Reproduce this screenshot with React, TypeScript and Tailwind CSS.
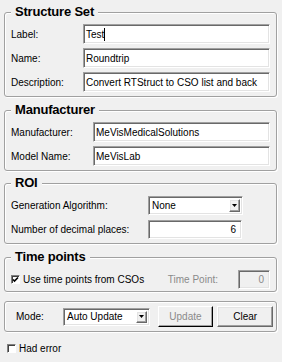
const sunken =
  "border border-t-[#a0a0a0] border-l-[#a0a0a0] border-b-white border-r-white shadow-[inset_1px_1px_0_#696969,inset_-1px_-1px_0_#e3e3e3]";
const raised =
  "border border-t-white border-l-white border-b-[#696969] border-r-[#696969] shadow-[inset_-1px_-1px_0_#a0a0a0,inset_1px_1px_0_#e3e3e3] bg-[#f0f0f0]";

function Group({ title, children, className = "" }: { title: string; children: React.ReactNode; className?: string }) {
  return (
    <fieldset
      className={`border border-[#a0a0a0] rounded-[3px] px-1.5 shadow-[inset_1px_1px_0_white,1px_1px_0_white] ${className}`}
    >
      <legend className="px-1 bg-[#f0f0f0] text-[13px] font-bold leading-4 tracking-[-0.2px]">{title}</legend>
      {children}
    </fieldset>
  );
}

function TextRow({ label, value, labelW, caret }: { label: string; value: string; labelW: string; caret?: boolean }) {
  return (
    <div className="flex items-center h-5">
      <span className={`${labelW} shrink-0`}>{label}</span>
      <div className={`flex-1 h-5 bg-white ${sunken} flex items-center pl-[2px]`}>
        <span>{value}</span>
        {caret && <span className="w-px h-[13px] bg-black" />}
      </div>
    </div>
  );
}

function Arrow() {
  return (
    <svg width="5" height="3" viewBox="0 0 5 3">
      <path d="M0 0h5L2.5 3z" fill="#000" />
    </svg>
  );
}

function Combo({ value, className }: { value: string; className: string }) {
  return (
    <div className={`bg-white ${sunken} flex items-center p-[2px] ${className}`}>
      <span className="flex-1 pl-[1px]">{value}</span>
      <div className={`w-[11px] h-full ${raised} flex items-center justify-center`}>
        <Arrow />
      </div>
    </div>
  );
}

function Check({ checked }: { checked?: boolean }) {
  return (
    <div className="w-[9px] h-[9px] shrink-0 bg-white border border-t-[#808080] border-l-[#808080] border-b-white border-r-white shadow-[inset_1px_1px_0_#404040] flex items-center justify-center">
      {checked && (
        <svg width="7" height="7" viewBox="0 0 7 7">
          <path d="M1 3.5l1.5 1.5L6 1.5" stroke="#000" strokeWidth="1.6" fill="none" />
        </svg>
      )}
    </div>
  );
}

export default function App() {
  return (
    <div className="w-[282px] h-[362px] bg-[#f0f0f0] font-['Liberation_Sans',Arial,sans-serif] text-[10px] text-black pl-1 pr-[5px] pt-1 flex flex-col overflow-hidden">
      <Group title="Structure Set" className="pb-1">
        <div className="flex flex-col gap-1 pt-1">
          <TextRow label="Label:" value="Test" labelW="w-[72px]" caret />
          <TextRow label="Name:" value="Roundtrip" labelW="w-[72px]" />
          <TextRow label="Description:" value="Convert RTStruct to CSO list and back" labelW="w-[72px]" />
        </div>
      </Group>

      <Group title="Manufacturer" className="pb-1 mt-[5px]">
        <div className="flex flex-col gap-1 pt-1">
          <TextRow label="Manufacturer:" value="MeVisMedicalSolutions" labelW="w-[82px]" />
          <TextRow label="Model Name:" value="MeVisLab" labelW="w-[82px]" />
        </div>
      </Group>

      <Group title="ROI" className="pb-1 mt-1">
        <div className="flex flex-col gap-[5px] pt-[5px]">
          <div className="flex items-center h-[19px]">
            <span className="w-[137px] shrink-0">Generation Algorithm:</span>
            <Combo value="None" className="w-[95px] h-[19px]" />
          </div>
          <div className="flex items-center h-[19px]">
            <span className="w-[137px] shrink-0">Number of decimal places:</span>
            <div className={`w-[94px] h-[19px] bg-white ${sunken} flex items-center justify-end pr-[5px]`}>6</div>
          </div>
        </div>
      </Group>

      <Group title="Time points" className="pb-[2px] mt-[5px]">
        <div className="flex items-center h-[19px] mt-[5px]">
          <Check checked />
          <span className="ml-[3px]">Use time points from CSOs</span>
          <span className="ml-auto text-[#8a8a8a]">Time Point:</span>
          <div className={`ml-[20px] w-[32px] h-[19px] ${sunken} flex items-center justify-end pr-[5px] text-[#8a8a8a]`}>
            0
          </div>
        </div>
      </Group>

      <div className="mt-[9px] h-[31px] border border-[#a0a0a0] rounded-[3px] shadow-[inset_1px_1px_0_white,1px_1px_0_white] flex items-center pl-[11px] pr-[3px]">
        <span className="w-[47px] shrink-0">Mode:</span>
        <Combo value="Auto Update" className="w-[87px] h-[18px]" />
        <div className="ml-2 w-[56px] h-[21px] border border-t-white border-l-white border-b-black border-r-black shadow-[inset_-1px_-1px_0_#a0a0a0] flex items-center justify-center text-[#8a8a8a]">
          Update
        </div>
        <div className={`ml-1 w-[56px] h-[21px] ${raised} flex items-center justify-center`}>Clear</div>
      </div>

      <div className="mt-[11px] flex items-center h-[11px] pl-[3px]">
        <Check />
        <span className="ml-[3px]">Had error</span>
      </div>
    </div>
  );
}
